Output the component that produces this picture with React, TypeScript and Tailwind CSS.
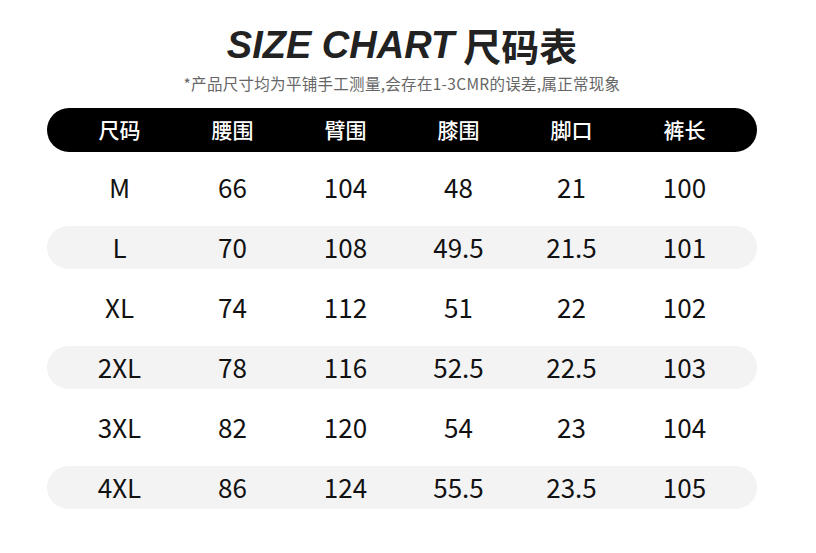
import React from "react";

const headers = ["尺码", "腰围", "臂围", "膝围", "脚口", "裤长"];
const rows = [
  ["M", "66", "104", "48", "21", "100"],
  ["L", "70", "108", "49.5", "21.5", "101"],
  ["XL", "74", "112", "51", "22", "102"],
  ["2XL", "78", "116", "52.5", "22.5", "103"],
  ["3XL", "82", "120", "54", "23", "104"],
  ["4XL", "86", "124", "55.5", "23.5", "105"],
];

export default function App() {
  return (
    <div
      className="w-[816px] h-[553px] bg-white flex flex-col items-center overflow-hidden pr-[12px]"
      style={{ fontFamily: '"Noto Sans CJK SC", "Noto Sans", sans-serif' }}
    >
      <div className="mt-[22px] h-[46px] flex items-center text-[#222] leading-none">
        <span
          className="text-[38px] font-bold italic tracking-[0px]"
          style={{ fontFamily: '"Liberation Sans", Arial, sans-serif' }}
        >
          SIZE CHART
        </span>
        <span className="ml-[9px] text-[38px] font-bold">尺码表</span>
      </div>
      <div className="mt-[8px] text-[15.5px] leading-none text-[#666] tracking-[0.3px]">
        *产品尺寸均为平铺手工测量,会存在1-3CMR的误差,属正常现象
      </div>
      <div className="mt-[16px] w-[710px] flex flex-col">
        <div className="h-[44px] rounded-full bg-black px-[16px] grid grid-cols-6 items-center text-white text-[21px] font-medium">
          {headers.map((h) => (
            <div key={h} className="text-center">
              {h}
            </div>
          ))}
        </div>
        <div className="mt-[14px] flex flex-col gap-[17px]">
          {rows.map((r, i) => (
            <div
              key={r[0]}
              className={`h-[43px] rounded-full px-[16px] grid grid-cols-6 items-center text-[26px] leading-none text-[#111] ${
                i % 2 === 1 ? "bg-[#f3f3f3]" : "bg-white"
              }`}
            >
              {r.map((c, j) => (
                <div key={j} className="text-center">
                  {c}
                </div>
              ))}
            </div>
          ))}
        </div>
      </div>
    </div>
  );
}
